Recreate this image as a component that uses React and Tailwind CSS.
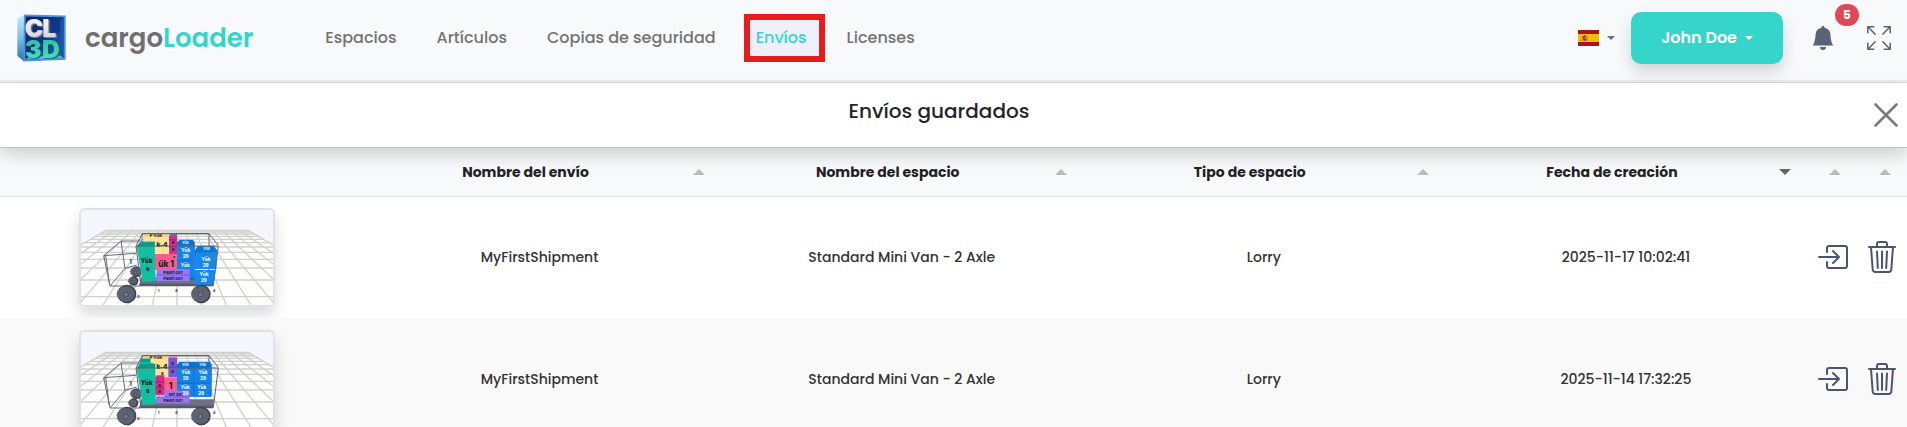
import { BsArrowsFullscreen, BsBellFill } from "react-icons/bs";

const links = [
  { label: "Espacios" },
  { label: "Artículos" },
  { label: "Copias de seguridad" },
  { label: "Envíos", active: true },
  { label: "Licenses" },
];

const columns = [
  "Nombre del envío",
  "Nombre del espacio",
  "Tipo de espacio",
  "Fecha de creación",
];

const shipments = [
  {
    id: 1,
    name: "MyFirstShipment",
    space: "Standard Mini Van - 2 Axle",
    type: "Lorry",
    created: "2025-11-17 10:02:41",
    Cargo: CargoStacked,
  },
  {
    id: 2,
    name: "MyFirstShipment",
    space: "Standard Mini Van - 2 Axle",
    type: "Lorry",
    created: "2025-11-14 17:32:25",
    Cargo: CargoFlat,
  },
];

function Logo() {
  return (
    <svg viewBox="51 45 147 143" className="h-12 w-[49px]" aria-hidden="true">
      <defs>
        <linearGradient id="side" x1="0" y1="0" x2="0" y2="1">
          <stop offset="0" stopColor="#c4ecfb" />
          <stop offset="0.5" stopColor="#7cc0ea" />
          <stop offset="1" stopColor="#2c6cae" />
        </linearGradient>
        <linearGradient id="inner" x1="0" y1="0" x2="1" y2="1">
          <stop offset="0" stopColor="#0b1f63" />
          <stop offset="0.6" stopColor="#123a8f" />
          <stop offset="1" stopColor="#2b77c9" />
        </linearGradient>
        <linearGradient id="silver" x1="0" y1="0" x2="0" y2="1">
          <stop offset="0" stopColor="#ffffff" />
          <stop offset="1" stopColor="#c9cbd2" />
        </linearGradient>
        <linearGradient id="mint" x1="0" y1="0" x2="0" y2="1">
          <stop offset="0" stopColor="#2fb9a5" />
          <stop offset="1" stopColor="#4fe3c2" />
        </linearGradient>
      </defs>
      <path d="M52 60 72 46V187L52 170Z" fill="url(#side)" />
      <path d="M72 46 197 49V182L70 187Z" fill="#4c94dc" />
      <path d="M77 52 191 54V177L76 181Z" fill="url(#inner)" />
      <path d="M181 66 191 54V177L181 168Z" fill="#1d55ab" />
      <path d="M76 181 90 170H181L191 177Z" fill="#63a9e6" />
      <g fontFamily="Inter, sans-serif" fontWeight="900" fontSize="74">
        <g fill="url(#silver)" className="drop-shadow-[4px_3px_0_#7d818f]">
          <text x="74" y="114">C</text>
          <text x="127" y="115">L</text>
        </g>
        <g fill="url(#mint)" className="drop-shadow-[4px_2px_0_#07694c]">
          <text x="75" y="177">3</text>
          <text x="126" y="177">D</text>
        </g>
      </g>
    </svg>
  );
}

function SpainFlag() {
  return (
    <svg viewBox="0 0 21 16" className="h-4 w-[21px]" aria-hidden="true">
      <path d="M0 0h21v16H0z" fill="#aa151b" />
      <path d="M0 4h21v8H0z" fill="#f1bf00" />
      <path d="M3.500 6h1.500v5H3.500zM8.500 6H10v5H8.500z" fill="#c48a5a" />
      <path d="M5 6.200 6.700 5l1.800 1.200v3.600L6.700 11.200 5 9.800Z" fill="#ad3a1c" />
      <path d="M7 7h1.500v1.500H7z" fill="#d9a7a0" />
    </svg>
  );
}

function Caret() {
  return <span className="border-x-4 border-t-4 border-x-transparent border-t-current" />;
}

function EnterIcon() {
  return (
    <svg
      viewBox="0 0 30 24"
      className="h-6 w-[30px]"
      fill="none"
      stroke="currentColor"
      strokeWidth="2"
      strokeLinecap="round"
      strokeLinejoin="round"
      aria-hidden="true"
    >
      <path d="M9 7V3a2 2 0 0 1 2-2h16a2 2 0 0 1 2 2v18a2 2 0 0 1-2 2H11a2 2 0 0 1-2-2v-4" />
      <path d="M1 12h20M15 6l6 6-6 6" />
    </svg>
  );
}

function TrashIcon() {
  return (
    <svg
      viewBox="0 0 28 32"
      className="h-8 w-7"
      fill="none"
      stroke="currentColor"
      strokeWidth="2"
      strokeLinecap="round"
      strokeLinejoin="round"
      aria-hidden="true"
    >
      <path d="M1 6h26M9 6V3a2 2 0 0 1 2-2h6a2 2 0 0 1 2 2v3" />
      <path d="m3 6 1.700 22.500A2.500 2.500 0 0 0 7.200 31h13.600a2.500 2.500 0 0 0 2.500-2.500L25 6" />
      <path d="m9 10.500.8 16.500M14 10.500V27M19 10.500 18.200 27" />
    </svg>
  );
}

function Wheel({ cx, cy, r }) {
  return (
    <g>
      <circle cx={cx + 3} cy={cy} r={r} fill="#3e434e" />
      <ellipse cx={cx} cy={cy} rx={r - 1} ry={r - 4} fill="#5d6371" stroke="#434955" strokeWidth="2" strokeDasharray="5 3" />
      <circle cx={cx} cy={cy + 2} r={r / 4} fill="#737987" stroke="#3c414d" strokeWidth="2" />
    </g>
  );
}

function CargoStacked() {
  return (
    <g>
      <path d="M351 156 360 149H398L404 156V270H351Z" fill="#0d6fd0" />
      <path d="M351 166H404V209H351ZM351 213H404V262H351Z" fill="#1485e6" />
      <path d="M247 140 262 131H325V190H280Z" fill="#fde397" />
      <path d="M247 140 262 131H325L322 140Z" fill="#f5d27a" />
      <path d="M327 137 334 131H351V192H327Z" fill="#d92c86" />
      <path d="M327 137 334 131H351V137Z" fill="#1d9c86" />
      <path d="M327 150H351M327 170H351" stroke="#8a1554" strokeWidth="2" />
      <path d="M284 192H351V240H284Z" fill="#fc5d8d" />
      <path d="M404 181 414 168H462L471 181 469 236H404Z" fill="#0f76d8" />
      <path d="M407 187H470L467 236H404ZM404 240H467L460 284H402Z" fill="#1888ea" />
      <path d="M230 169 243 155H284V166L287 272 248 277Z" fill="#11c0a3" />
      <path d="M230 169 243 155H284L285 166Z" fill="#0c9c88" />
      <path d="M290 238H389V274H288Z" fill="#9a78f2" />
      <path d="M288 255H389" stroke="#6a48c4" strokeWidth="2" />
      <g fontFamily="Inter, sans-serif" fontWeight="800" textAnchor="middle" fill="#20222a">
        <text x="288" y="140" fontSize="12">P YÜK</text>
        <text x="306" y="172" fontSize="20">k-4</text>
        <text x="318" y="232" fontSize="25">ük 1</text>
        <text x="342" y="204" fontSize="11">v</text>
        <text x="339" y="162" fontSize="12">8</text>
        <text x="339" y="184" fontSize="12">8</text>
        <text x="260" y="220" fontSize="18">Yük</text>
        <text x="263" y="242" fontSize="16">6</text>
        <text x="339" y="251" fontSize="12">Pallet 001</text>
        <text x="339" y="270" fontSize="12">Pallet 001</text>
      </g>
      <g fontFamily="Inter, sans-serif" fontWeight="800" textAnchor="middle" fill="#e3f2ff" fontSize="14">
        <text x="376" y="162" fontSize="9">YÜK</text>
        <text x="377" y="186">Yük</text>
        <text x="377" y="204">29</text>
        <text x="376" y="232">Yük</text>
        <text x="440" y="180" fontSize="9">YÜK</text>
        <text x="438" y="212">Yük</text>
        <text x="437" y="230">29</text>
        <text x="432" y="258">Yük</text>
        <text x="431" y="276">29</text>
      </g>
    </g>
  );
}

function CargoFlat() {
  return (
    <g>
      <path d="M351 158 358 150H450L455 158V254H351Z" fill="#0d6fd0" />
      <path d="M351 168H400V211H351ZM403 168H455V211H403ZM351 215H400V254H351ZM403 215H453L448 254H403Z" fill="#1485e6" />
      <path d="M247 140 262 131H325V196H288Z" fill="#fde397" />
      <path d="M247 140 262 131H325L322 140Z" fill="#f5d27a" />
      <path d="M325 137 332 131H351V195H325Z" fill="#7b53df" />
      <path d="M325 137 332 131H351V137Z" fill="#ee8fa6" />
      <path d="M325 165H351" stroke="#44289a" strokeWidth="2" />
      <path d="M312 196H351V240H312Z" fill="#fc5d8d" />
      <path d="M285 197 290 190H313V250H285Z" fill="#d92c86" />
      <path d="M285 210H313M285 228H313" stroke="#8a1554" strokeWidth="2" />
      <path d="M230 169 240 155V144L248 140H271V151L286 158 287 276 248 279Z" fill="#11c0a3" />
      <path d="M240 144 248 140H271V151H240ZM230 169 240 155H286L285 167Z" fill="#0c9c88" />
      <path d="M312 236H389V274H288V254H312Z" fill="#9a78f2" />
      <path d="M288 255H389" stroke="#6a48c4" strokeWidth="2" />
      <g fontFamily="Inter, sans-serif" fontWeight="800" textAnchor="middle" fill="#20222a">
        <text x="288" y="140" fontSize="12">P YÜK</text>
        <text x="306" y="170" fontSize="20">k-4</text>
        <text x="307" y="190" fontSize="12">8</text>
        <text x="338" y="158" fontSize="12">8</text>
        <text x="338" y="184" fontSize="12">8</text>
        <text x="332" y="232" fontSize="25">1</text>
        <text x="299" y="224" fontSize="12">8</text>
        <text x="299" y="243" fontSize="12">8</text>
        <text x="260" y="220" fontSize="18">Yük</text>
        <text x="263" y="242" fontSize="16">6</text>
        <text x="348" y="251" fontSize="12">llet 001</text>
        <text x="339" y="270" fontSize="12">Pallet 001</text>
      </g>
      <g fontFamily="Inter, sans-serif" fontWeight="800" textAnchor="middle" fill="#e3f2ff" fontSize="14">
        <text x="376" y="163" fontSize="9">YÜK</text>
        <text x="428" y="163" fontSize="9">YÜK</text>
        <text x="377" y="187">Yük</text>
        <text x="377" y="205">29</text>
        <text x="429" y="187">Yük</text>
        <text x="429" y="205">29</text>
        <text x="376" y="232">Yük</text>
        <text x="376" y="250">29</text>
        <text x="425" y="232">Yük</text>
        <text x="423" y="250">29</text>
      </g>
    </g>
  );
}

const floorRows = [121, 126, 132, 139, 148, 158, 171, 187, 208, 234, 270, 320];
// every floor line runs through the vanishing point at (351, -6)
const floorLines = Array.from({ length: 17 }, (_, i) => 137 + i * 26.75);

function Thumbnail({ Cargo }) {
  return (
    <svg viewBox="63 60 576 285" preserveAspectRatio="xMidYMid slice" className="block h-full w-full" aria-hidden="true">
      <path d="M0 0H700V400H0Z" fill="#f5f7fc" />
      <path d="M137 121H565L952 351H-250Z" fill="#fdfdfe" />
      <g stroke="#d0d0cc" strokeWidth="4">
        {floorRows.map((y) => {
          const half = (214 * (y + 6)) / 127;
          return <line key={y} x1={351 - half} x2={351 + half} y1={y} y2={y} />;
        })}
        {floorLines.map((x) => (
          <line key={x} x1={x} y1={121} x2={351 + (x - 351) * 2.81} y2={351} />
        ))}
      </g>
      <Wheel cx={226} cy={245} r={16} />
      <Wheel cx={218} cy={273} r={14} />
      <path d="M243 262H462L459 288H238Z" fill="#6b7180" />
      <path d="M238 281H460V289H238Z" fill="#555b69" />
      <g fill="none" stroke="#656b79" strokeWidth="3" strokeLinejoin="round">
        <path d="M131 197 183 153H245M131 197 228 190M131 197 150 288H240M183 153 195 235 150 288M137 197 148 280M195 235 230 225" />
        <path d="M247 131H447V250M247 131 240 260" />
      </g>
      <Cargo />
      <g fill="none" stroke="#5d6372" strokeWidth="3" strokeLinejoin="round">
        <path d="M228 168H475L460 286M247 131 228 168 243 286M447 131 475 166M247 131H447" />
      </g>
      <Wheel cx={198} cy={312} r={28} />
      <Wheel cx={421} cy={312} r={28} />
      <g fontFamily="Inter, sans-serif" fontWeight="700" fill="#343843" fontSize="12">
        <text x="208" y="222" fontSize="18">1</text>
        <text x="231" y="323">0</text>
        <text x="293" y="306">1</text>
        <text x="346" y="307">6</text>
        <text x="458" y="306">4</text>
      </g>
    </svg>
  );
}

function Navbar() {
  return (
    <header className="border-b border-[#d8d8e2] bg-[#f8f9fb]">
      <div className="flex h-[82px] items-center border-b-2 border-[#ececec] pr-4 pb-1 pl-[17px]">
        <a href="#" className="flex items-center gap-[19px]">
          <Logo />
          <span className="text-[26px] leading-10 font-semibold text-[#6f6f6f]">
            cargo<span className="text-[#36d5cc]">Loader</span>
          </span>
        </a>
        <nav className="ml-15 flex items-center gap-4">
          {links.map(({ label, active }) => (
            <a
              key={label}
              href="#"
              className={
                active
                  ? "relative rounded-lg bg-[#efeffa] px-3 py-2 text-base font-medium text-[#36d5cc]"
                  : "px-3 py-2 text-base font-medium text-[#747474]"
              }
            >
              {label}
              {active && <span className="absolute -inset-y-1 -right-1.5 left-0 border-6 border-[#e81c1c]" />}
            </a>
          ))}
        </nav>
        <div className="ml-auto flex items-center text-[#596377]">
          <button type="button" aria-label="Español" className="flex items-center gap-2 text-[#6f6f6f]">
            <SpainFlag />
            <Caret />
          </button>
          <button
            type="button"
            className="ml-4 flex items-center gap-2 rounded-[10px] bg-[#36d5cc] px-[30px] py-3.5 text-base leading-6 font-semibold text-white shadow-[0_8px_16px_rgba(0,0,0,0.15)]"
          >
            John Doe
            <Caret />
          </button>
          <button type="button" aria-label="Notificaciones" className="relative ml-7">
            <BsBellFill size={24} />
            <span className="absolute -top-[22px] left-6 flex h-[22px] w-6 items-center justify-center rounded-full bg-[#df4858] text-xs font-bold text-white">
              5
            </span>
          </button>
          <button type="button" aria-label="Pantalla completa" className="ml-8">
            <BsArrowsFullscreen size={24} />
          </button>
        </div>
      </div>
    </header>
  );
}

function SortArrow({ down }) {
  return down ? (
    <span className="border-x-6 border-t-6 border-x-transparent border-t-[#666]" />
  ) : (
    <span className="border-x-6 border-b-6 border-x-transparent border-b-[#bbb]" />
  );
}

export default function App() {
  return (
    <div className="flex h-screen flex-col overflow-hidden bg-white font-['Poppins',Inter,sans-serif]">
      <Navbar />
      <div className="relative z-10 flex h-[65px] shrink-0 items-center border-b border-[#bfc1c1] bg-white pr-[9px] shadow-[0_8px_16px_rgba(0,0,0,0.15)]">
        <h1 className="flex-1 pb-2 pl-1 text-center text-xl font-medium text-[#212529]">Envíos guardados</h1>
        <button type="button" aria-label="Cerrar" className="text-[#7b7b7b]">
          <svg viewBox="0 0 24 24" className="size-6" stroke="currentColor" strokeWidth="2.600" strokeLinecap="round" aria-hidden="true">
            <path d="M1.500 1.500l21 21M22.500 1.500l-21 21" />
          </svg>
        </button>
      </div>
      <table className="w-full table-fixed text-sm text-[#333]">
        <colgroup>
          <col className="w-[18.8%]" />
          <col />
          <col />
          <col />
          <col />
          <col className="w-[50px]" />
          <col className="w-[50px]" />
        </colgroup>
        <thead className="bg-[#f8f9fb] text-[#222]">
          <tr className="h-12 border-b border-[#dee2e6]">
            <td />
            {columns.map((title, i) => (
              <th key={title} className="pr-4 font-bold">
                <div className="flex items-center">
                  <span className="flex-1">{title}</span>
                  <SortArrow down={i === 3} />
                </div>
              </th>
            ))}
            {["Abrir", "Eliminar"].map((action) => (
              <th key={action} aria-label={action} className="pr-4">
                <div className="flex justify-end">
                  <SortArrow />
                </div>
              </th>
            ))}
          </tr>
        </thead>
        <tbody>
          {shipments.map(({ id, name, space, type, created, Cargo }) => (
            <tr key={id} className="h-[122px] text-center font-medium even:bg-[#f9f9f9]">
              <td className="pr-1">
                <div className="mx-auto h-[99px] w-[196px] overflow-hidden rounded-md border-2 border-[#dee2e6] shadow-[0_8px_16px_rgba(0,0,0,0.15)]">
                  <Thumbnail Cargo={Cargo} />
                </div>
              </td>
              <td>{name}</td>
              <td>{space}</td>
              <td>{type}</td>
              <td>{created}</td>
              <td className="pl-0.5">
                <button type="button" aria-label="Abrir envío" className="align-middle text-[#4a5670]">
                  <EnterIcon />
                </button>
              </td>
              <td>
                <button type="button" aria-label="Eliminar envío" className="align-middle text-[#4a5670]">
                  <TrashIcon />
                </button>
              </td>
            </tr>
          ))}
        </tbody>
      </table>
    </div>
  );
}
